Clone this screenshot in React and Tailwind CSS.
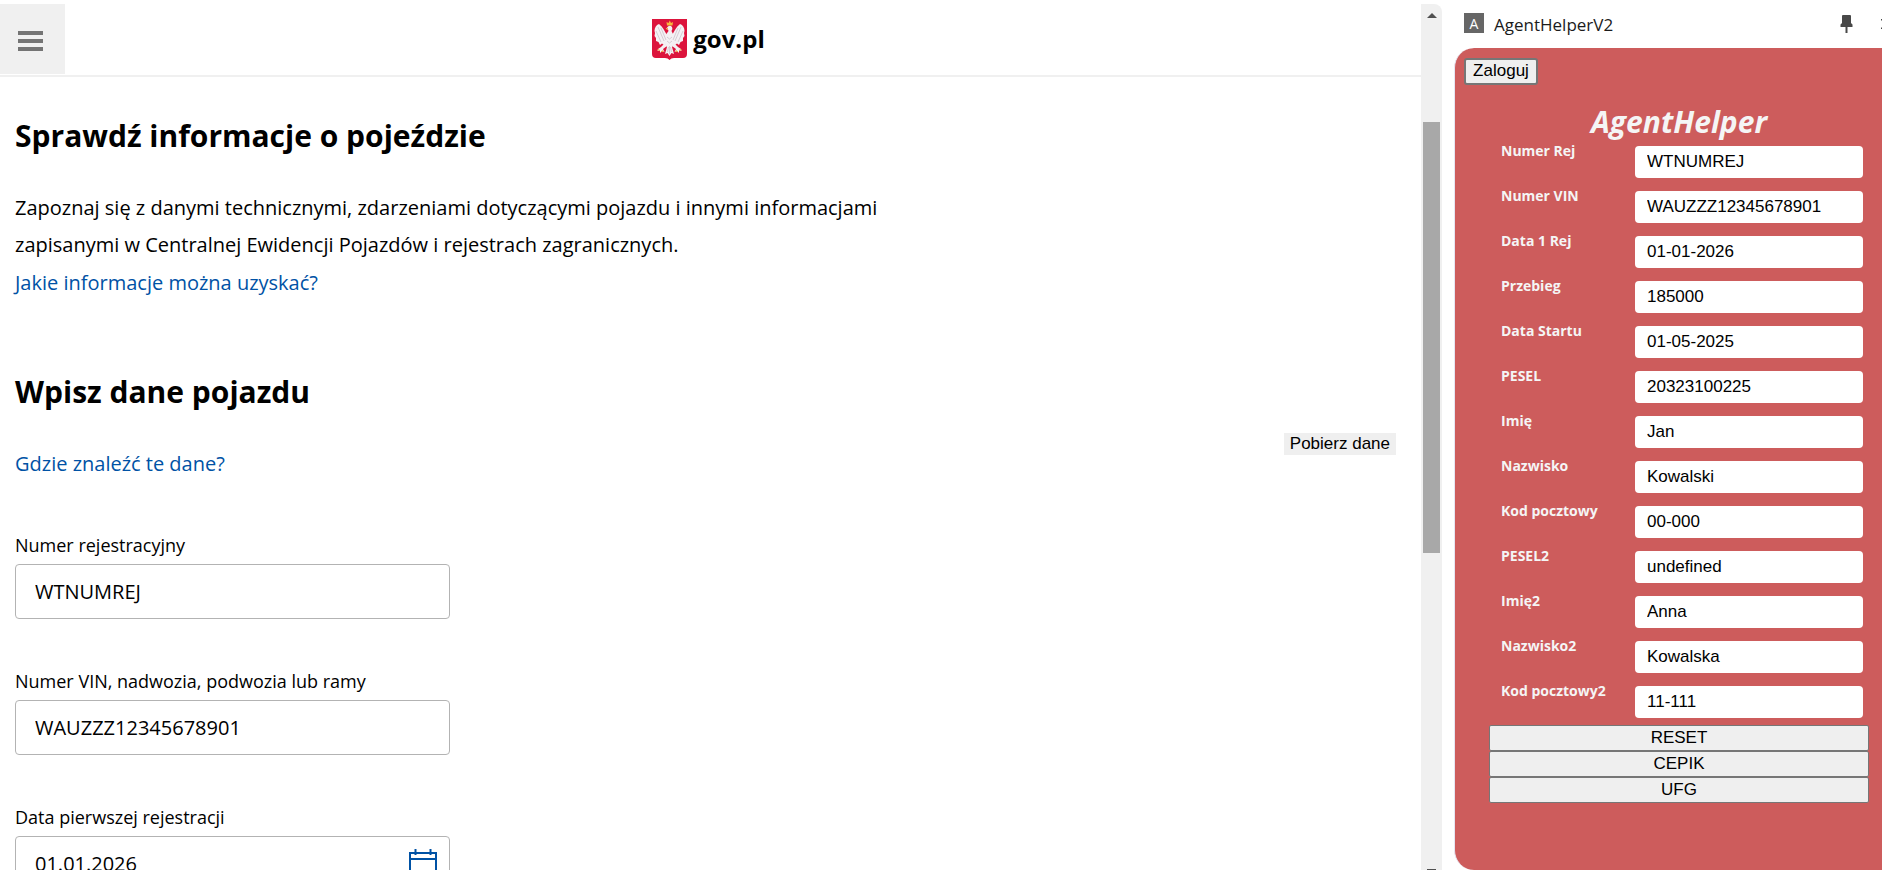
import React from "react";

const vehicleFields = [
  { id: "plate", label: "Numer rejestracyjny", value: "WTNUMREJ" },
  {
    id: "vin",
    label: "Numer VIN, nadwozia, podwozia lub ramy",
    value: "WAUZZZ12345678901",
  },
  {
    id: "first-date",
    label: "Data pierwszej rejestracji",
    value: "01.01.2026",
    calendar: true,
  },
];

const helperFields = [
  ["Numer Rej", "WTNUMREJ"],
  ["Numer VIN", "WAUZZZ12345678901"],
  ["Data 1 Rej", "01-01-2026"],
  ["Przebieg", "185000"],
  ["Data Startu", "01-05-2025"],
  ["PESEL", "20323100225"],
  ["Imię", "Jan"],
  ["Nazwisko", "Kowalski"],
  ["Kod pocztowy", "00-000"],
  ["PESEL2", "undefined"],
  ["Imię2", "Anna"],
  ["Nazwisko2", "Kowalska"],
  ["Kod pocztowy2", "11-111"],
];

const helperActions = ["RESET", "CEPIK", "UFG"];

const EagleLogo = () => (
  <svg width="35" height="41" viewBox="0 0 35 41" aria-hidden="true">
    <path
      d="M0 0h35v35q0 4-4 4H22q-3 0-4.500 2Q16 39 13 39H4q-4 0-4-4z"
      fill="#dc143c"
    />
    {/* wings */}
    <g fill="#f4f1f4">
      <path d="M15 16C13 13 11 8 7 5C4 6 2.500 9 2.500 12L3 14L2.500 17L4 19L4 22L6.500 23L8 26L10 24.500L12 26L14 24L16 24z" />
      <path d="M20 16C22 13 24 8 28 5C31 6 32.500 9 32.500 12L32 14L32.500 17L31 19L31 22L28.500 23L27 26L25 24.500L23 26L21 24L19 24z" />
      {/* head, body and tail */}
      <path d="M15.500 8Q18 5.500 20 8Q21 10 19.500 12L22 17L22 25L20 28L22 35L19.500 34L17.500 37L15.500 34L13 35L15 28L13 25L13 17L16.500 12L16 10.500L14 10z" />
      {/* legs */}
      <path d="M13 24L9 28L6 30L5.500 32L8 31.500L8 34L10 32L12.500 33L11 30L15 27z" />
      <path d="M22 24L26 28L29 30L29.500 32L27 31.500L27 34L25 32L22.500 33L24 30L20 27z" />
    </g>
    <g fill="none" stroke="#c9bcc6" strokeWidth="0.7">
      <path d="M6 8l6 14M4 12l5 11M9 9l5 12M29 8l-6 14M31 12l-5 11M26 9l-5 12" />
      <path d="M15 18l2.500 2l2.500-2M15 22l2.500 2l2.500-2M17.500 27v8M15.500 33l1-5M19.500 33l-1-5" />
    </g>
    {/* crown, beak and claws */}
    <path
      d="M15 6.500L14.500 3L16.500 4L17.800 1.500L19 4L21 3L20.500 6.500z"
      fill="#f5b93c"
    />
    <path
      d="M13.500 9.500l2.500-.8v2zM5 31l2-1 1 2zM30 31l-2-1-1 2zM9 33l1.500-2 1 2zM26 33l-1.500-2-1 2z"
      fill="#f0a93c"
    />
  </svg>
);

const CalendarIcon = () => (
  <svg
    width="28"
    height="29"
    viewBox="0 0 28 29"
    fill="none"
    stroke="#0052a5"
    strokeWidth="2"
    aria-hidden="true"
  >
    <path d="M1 4h26v24H1zM1 10h26M6.500 0v6M21.500 0v6" />
  </svg>
);

const Scrollbar = () => (
  <div className="flex w-[21px] shrink-0 flex-col items-center pt-1">
    <div className="flex w-full flex-1 flex-col items-center rounded-tr-lg bg-[#f0f0f0]">
      <svg className="mt-[9px]" width="10" height="5" viewBox="0 0 10 5">
        <path d="M0 5L5 0L10 5z" fill="#505050" />
      </svg>
      <div className="mt-[104px] h-[431px] w-[17px] bg-[#a8a8a8]" />
      <div className="mt-auto h-px w-[9px] bg-[#505050]" />
    </div>
  </div>
);

const VehicleField = ({ id, label, value, calendar }) => (
  <div className="w-[435px] max-w-full">
    <label htmlFor={id} className="block text-[18px] leading-[26px]">
      {label}
    </label>
    <div className="relative mt-1.5">
      <input
        id={id}
        defaultValue={value}
        className="block h-[55px] w-full rounded-[4px] border border-[#b3b3b3] bg-white px-[19px] text-[20px]"
      />
      {calendar && (
        <button
          type="button"
          aria-label="Kalendarz"
          className="absolute top-[13px] right-[13px]"
        >
          <CalendarIcon />
        </button>
      )}
    </div>
  </div>
);

const GovPage = () => (
  <div className="flex min-w-0 flex-1 flex-col font-['Open_Sans',sans-serif] text-black">
    <header className="grid h-[77px] shrink-0 grid-cols-[1fr_auto_1fr] items-center border-b-2 border-[#f0f0f0]">
      <button
        type="button"
        aria-label="Menu"
        className="mt-1 flex h-[70px] w-[65px] items-center self-start bg-[#f0f0f0] pt-1 pl-[18px]"
      >
        <span className="flex w-[25px] flex-col gap-1">
          <span className="h-1 bg-[#747474]" />
          <span className="h-1 bg-[#747474]" />
          <span className="h-1 bg-[#747474]" />
        </span>
      </button>
      <a href="#" className="flex items-center gap-1.5 pt-1 pr-1">
        <EagleLogo />
        <span className="pb-0.5 text-[24px] leading-[32px] font-bold">
          gov.pl
        </span>
      </a>
    </header>

    <main className="px-[15px] pt-[39px]">
      <h1 className="text-[30px] leading-[40px] font-bold">
        Sprawdź informacje o pojeździe
      </h1>
      <p className="mt-[33px] max-w-[900px] text-[20px] leading-[37px]">
        Zapoznaj się z danymi technicznymi, zdarzeniami dotyczącymi pojazdu i
        innymi informacjami zapisanymi w Centralnej Ewidencji Pojazdów i
        rejestrach zagranicznych.
      </p>
      <a
        href="#"
        className="mt-px inline-block text-[20px] leading-[37px] text-[#0052a5]"
      >
        Jakie informacje można uzyskać?
      </a>

      <h2 className="mt-[71px] text-[30px] leading-[40px] font-bold">
        Wpisz dane pojazdu
      </h2>
      <div className="flex items-start justify-between pr-[10px]">
        <a
          href="#"
          className="mt-[33px] text-[20px] leading-[37px] text-[#0052a5]"
        >
          Gdzie znaleźć te dane?
        </a>
        <button
          type="button"
          className="mt-[21px] bg-[#efefef] px-1.5 font-['Liberation_Sans',Arial,sans-serif] text-[17px] leading-[22px]"
        >
          Pobierz dane
        </button>
      </div>

      <form className="mt-[50px] flex flex-col gap-[49px]">
        {vehicleFields.map((field) => (
          <VehicleField key={field.id} {...field} />
        ))}
      </form>
    </main>
  </div>
);

const HelperPanel = () => (
  <aside className="flex w-[440px] shrink-0 flex-col overflow-hidden pl-3">
    <div className="flex h-12 shrink-0 items-center pl-[10px]">
      <span className="mb-0.5 flex size-5 items-center justify-center bg-[#666] font-['Open_Sans',sans-serif] text-[14px] text-white">
        A
      </span>
      <span className="ml-2.5 pt-px font-['Open_Sans',sans-serif] text-[17px] text-[#1b1b1b]">
        AgentHelperV2
      </span>
      <button type="button" aria-label="Przypnij" className="mr-7 ml-auto">
        <svg width="13" height="18" viewBox="0 0 13 18" fill="#484848">
          <path d="M3 0h7q1 0 1 1v7l1.500 1.500V12H7.500v6H5.500v-6H.5V9.500L2 8V1q0-1 1-1z" />
        </svg>
      </button>
      {/* close button, cut off by the window edge */}
      <button type="button" aria-label="Zamknij" className="-mr-[9px]">
        <svg width="10" height="10" viewBox="0 0 10 10" stroke="#484848">
          <path d="M0 0l10 10M10 0L0 10" strokeWidth="1.500" />
        </svg>
      </button>
    </div>

    <div className="flex-1 rounded-l-[20px] border-l border-[#e6e6f2] bg-[#cd5c5c] pt-[10px] pl-[9px]">
      <button
        type="button"
        className="block h-[27px] w-[74px] rounded-[3px] border-2 border-[#767676] bg-[#efefef] pb-0.5 font-['Liberation_Sans',Arial,sans-serif] text-[17px] leading-[20px] text-black"
      >
        Zaloguj
      </button>

      <form className="mt-[17px] mr-[13px] ml-[25px]">
        <h2 className="text-center font-['Open_Sans',sans-serif] text-[30px] leading-[40px] font-bold text-[#f5f5f5] italic">
          AgentHelper
        </h2>
        <div className="mt-1 flex flex-col gap-[13px] pr-1.5 pl-3">
          {helperFields.map(([label, value]) => (
            <div key={label} className="flex items-start">
              <label
                htmlFor={label}
                className="-mt-[5px] flex-1 font-['Open_Sans',sans-serif] text-[14px] leading-[20px] font-bold text-[#f5f5f5]"
              >
                {label}
              </label>
              <input
                id={label}
                defaultValue={value}
                className="h-8 w-[228px] rounded-[4px] bg-white px-3 font-['Liberation_Sans',Arial,sans-serif] text-[17px] text-black"
              />
            </div>
          ))}
        </div>
        <div className="mt-[7px] flex flex-col">
          {helperActions.map((action) => (
            <button
              key={action}
              type="button"
              className="h-[26px] rounded-[2px] border border-[#767676] bg-[#efefef] font-['Liberation_Sans',Arial,sans-serif] text-[17px] leading-[22px] text-black"
            >
              {action}
            </button>
          ))}
        </div>
      </form>
    </div>
  </aside>
);

const App = () => {
  return (
    <div className="flex h-screen overflow-hidden bg-white">
      <GovPage />
      <Scrollbar />
      <HelperPanel />
    </div>
  );
};

export default App;
